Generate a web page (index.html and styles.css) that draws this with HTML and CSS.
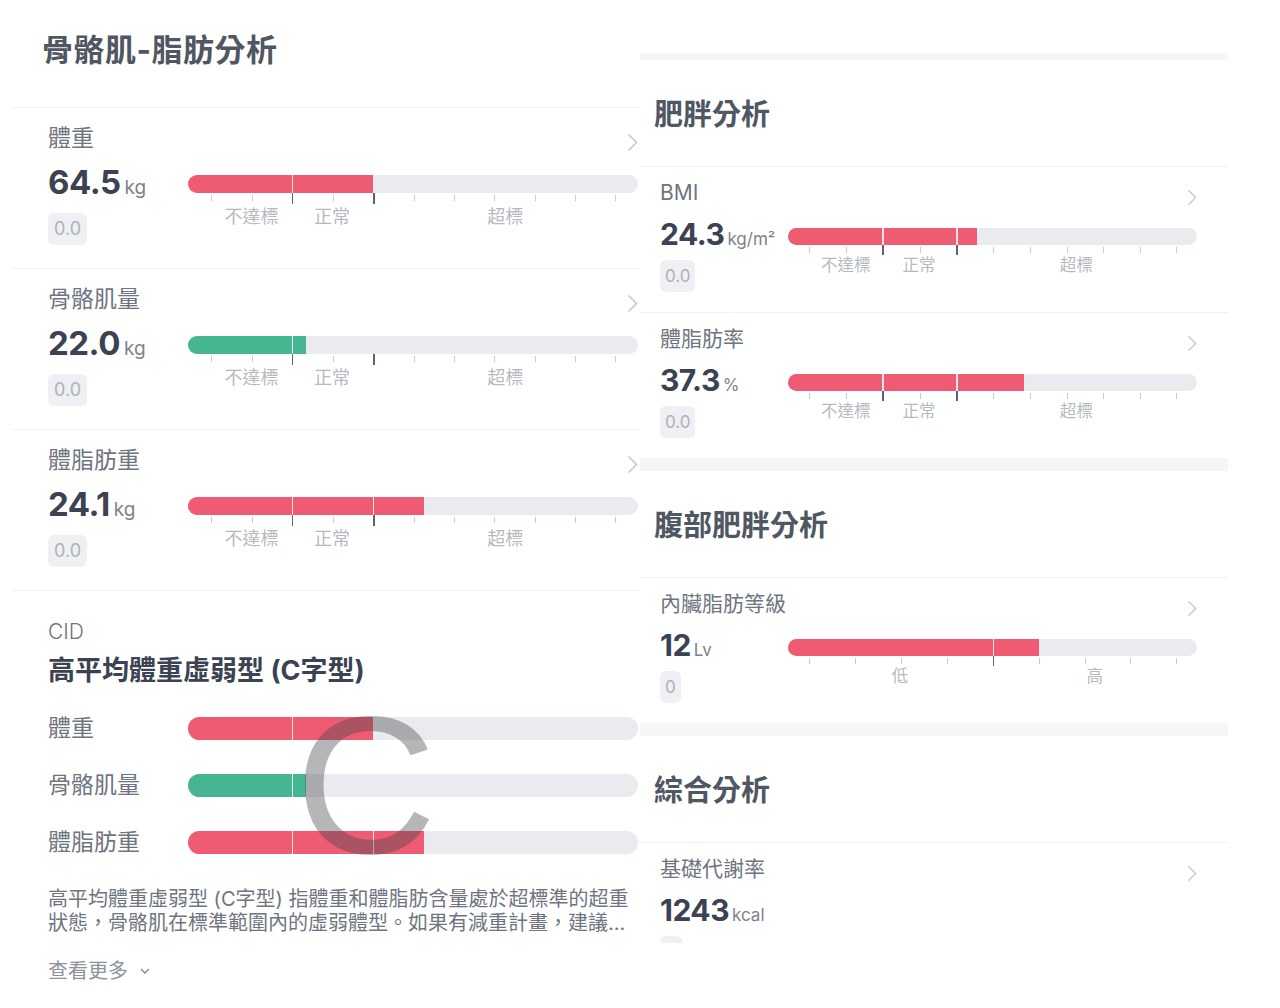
FILE: index.html
```html
<!DOCTYPE html>
<html lang="zh-Hant">
<head>
    <meta charset="UTF-8">
    <meta name="viewport" content="width=device-width, initial-scale=1.0">
    <title>身體組成分析</title>
    <link rel="stylesheet" href="styles.css">
</head>
<body>
    <div class="screens">

        <!-- Pantalla izquierda: músculo / grasa -->
        <section class="panel panel-left">
            <h2 class="panel-title">骨骼肌-脂肪分析</h2>

            <div class="metric">
                <div class="metric-head">
                    <span class="metric-name">體重</span>
                    <svg class="chev" viewBox="0 0 11 19"><polyline points="1.5,1.5 9.5,9.5 1.5,17.5"/></svg>
                </div>
                <div class="metric-body">
                    <div class="metric-value">
                        <div class="reading"><b>64.5</b><small>kg</small></div>
                        <span class="delta">0.0</span>
                    </div>
                    <div class="gauge">
                        <div class="track">
                            <div class="fill red" style="width:41.3%"></div>
                            <i class="cut cut-a"></i><i class="cut cut-b"></i>
                        </div>
                        <div class="ticks">
                            <i></i><i></i><i class="major"></i><i></i><i class="major"></i><i></i><i></i><i></i><i></i><i></i><i></i>
                        </div>
                        <div class="scale">
                            <span class="lbl-under">不達標</span><span class="lbl-normal">正常</span><span class="lbl-over">超標</span>
                        </div>
                    </div>
                </div>
            </div>

            <div class="metric">
                <div class="metric-head">
                    <span class="metric-name">骨骼肌量</span>
                    <svg class="chev" viewBox="0 0 11 19"><polyline points="1.5,1.5 9.5,9.5 1.5,17.5"/></svg>
                </div>
                <div class="metric-body">
                    <div class="metric-value">
                        <div class="reading"><b>22.0</b><small>kg</small></div>
                        <span class="delta">0.0</span>
                    </div>
                    <div class="gauge">
                        <div class="track">
                            <div class="fill green" style="width:26.2%"></div>
                            <i class="cut cut-a"></i>
                        </div>
                        <div class="ticks">
                            <i></i><i></i><i class="major"></i><i></i><i class="major"></i><i></i><i></i><i></i><i></i><i></i><i></i>
                        </div>
                        <div class="scale">
                            <span class="lbl-under">不達標</span><span class="lbl-normal">正常</span><span class="lbl-over">超標</span>
                        </div>
                    </div>
                </div>
            </div>

            <div class="metric">
                <div class="metric-head">
                    <span class="metric-name">體脂肪重</span>
                    <svg class="chev" viewBox="0 0 11 19"><polyline points="1.5,1.5 9.5,9.5 1.5,17.5"/></svg>
                </div>
                <div class="metric-body">
                    <div class="metric-value">
                        <div class="reading"><b>24.1</b><small>kg</small></div>
                        <span class="delta">0.0</span>
                    </div>
                    <div class="gauge">
                        <div class="track">
                            <div class="fill red" style="width:52.4%"></div>
                            <i class="cut cut-a"></i><i class="cut cut-b"></i>
                        </div>
                        <div class="ticks">
                            <i></i><i></i><i class="major"></i><i></i><i class="major"></i><i></i><i></i><i></i><i></i><i></i><i></i>
                        </div>
                        <div class="scale">
                            <span class="lbl-under">不達標</span><span class="lbl-normal">正常</span><span class="lbl-over">超標</span>
                        </div>
                    </div>
                </div>
            </div>

            <div class="cid">
                <div class="cid-tag">CID</div>
                <div class="cid-title">高平均體重虛弱型 (C字型)</div>

                <div class="cid-bars">
                    <span class="cid-name">體重</span>
                    <div class="track track-lg">
                        <div class="fill red" style="width:41.3%"></div>
                        <i class="cut cut-a"></i><i class="cut cut-b"></i>
                    </div>
                    <span class="cid-name">骨骼肌量</span>
                    <div class="track track-lg">
                        <div class="fill green" style="width:26.2%"></div>
                        <i class="cut cut-a"></i>
                    </div>
                    <span class="cid-name">體脂肪重</span>
                    <div class="track track-lg">
                        <div class="fill red" style="width:52.4%"></div>
                        <i class="cut cut-a"></i><i class="cut cut-b"></i>
                    </div>
                    <span class="cid-letter">C</span>
                </div>

                <p class="cid-desc">高平均體重虛弱型 (C字型) 指體重和體脂肪含量處於超標準的超重狀態，骨骼肌在標準範圍內的虛弱體型。如果有減重計畫，建議...</p>
                <div class="more">查看更多
                    <svg class="chev-down" viewBox="0 0 10 6"><polyline points="1,1 5,5 9,1"/></svg>
                </div>
            </div>
        </section>

        <!-- Pantalla derecha: obesidad -->
        <section class="panel panel-right">
            <div class="group">
                <h2 class="group-title">肥胖分析</h2>

                <div class="metric">
                    <div class="metric-head">
                        <span class="metric-name">BMI</span>
                        <svg class="chev" viewBox="0 0 11 19"><polyline points="1.5,1.5 9.5,9.5 1.5,17.5"/></svg>
                    </div>
                    <div class="metric-body">
                        <div class="metric-value">
                            <div class="reading"><b>24.3</b><small>kg/m²</small></div>
                            <span class="delta">0.0</span>
                        </div>
                        <div class="gauge">
                            <div class="track">
                                <div class="fill red" style="width:46.2%"></div>
                                <i class="cut cut-a"></i><i class="cut cut-b"></i>
                            </div>
                            <div class="ticks">
                                <i></i><i></i><i class="major"></i><i></i><i class="major"></i><i></i><i></i><i></i><i></i><i></i><i></i>
                            </div>
                            <div class="scale">
                                <span class="lbl-under">不達標</span><span class="lbl-normal">正常</span><span class="lbl-over">超標</span>
                            </div>
                        </div>
                    </div>
                </div>

                <div class="metric">
                    <div class="metric-head">
                        <span class="metric-name">體脂肪率</span>
                        <svg class="chev" viewBox="0 0 11 19"><polyline points="1.5,1.5 9.5,9.5 1.5,17.5"/></svg>
                    </div>
                    <div class="metric-body">
                        <div class="metric-value">
                            <div class="reading"><b>37.3</b><small>%</small></div>
                            <span class="delta">0.0</span>
                        </div>
                        <div class="gauge">
                            <div class="track">
                                <div class="fill red" style="width:57.7%"></div>
                                <i class="cut cut-a"></i><i class="cut cut-b"></i>
                            </div>
                            <div class="ticks">
                                <i></i><i></i><i class="major"></i><i></i><i class="major"></i><i></i><i></i><i></i><i></i><i></i><i></i>
                            </div>
                            <div class="scale">
                                <span class="lbl-under">不達標</span><span class="lbl-normal">正常</span><span class="lbl-over">超標</span>
                            </div>
                        </div>
                    </div>
                </div>
            </div>

            <div class="group">
                <h2 class="group-title">腹部肥胖分析</h2>

                <div class="metric">
                    <div class="metric-head">
                        <span class="metric-name">內臟脂肪等級</span>
                        <svg class="chev" viewBox="0 0 11 19"><polyline points="1.5,1.5 9.5,9.5 1.5,17.5"/></svg>
                    </div>
                    <div class="metric-body">
                        <div class="metric-value">
                            <div class="reading"><b>12</b><small>Lv</small></div>
                            <span class="delta">0</span>
                        </div>
                        <div class="gauge">
                            <div class="track">
                                <div class="fill red" style="width:61.4%"></div>
                                <i class="cut cut-mid"></i>
                            </div>
                            <div class="ticks">
                                <i></i><i></i><i></i><i></i><i class="major"></i><i></i><i></i><i></i><i></i>
                            </div>
                            <div class="scale">
                                <span class="lbl-low">低</span><span class="lbl-high">高</span>
                            </div>
                        </div>
                    </div>
                </div>
            </div>

            <div class="group">
                <h2 class="group-title">綜合分析</h2>

                <div class="metric">
                    <div class="metric-head">
                        <span class="metric-name">基礎代謝率</span>
                        <svg class="chev" viewBox="0 0 11 19"><polyline points="1.5,1.5 9.5,9.5 1.5,17.5"/></svg>
                    </div>
                    <div class="metric-body">
                        <div class="metric-value">
                            <div class="reading"><b>1243</b><small>kcal</small></div>
                            <span class="delta delta-empty"></span>
                        </div>
                    </div>
                </div>
            </div>
        </section>

    </div>
</body>
</html>
```

FILE: styles.css
```css
/* Reset básico */
* {
    box-sizing: border-box;
}

html, body {
    margin: 0;
    padding: 0;
    height: 100%;
    overflow: hidden;
    background-color: #fff;
    font-family: 'Inter', 'Noto Sans CJK TC', sans-serif;
    color: #3b4352;
}

.screens {
    display: flex;
    align-items: flex-start;
}

.panel {
    background-color: #fff;
}

/* ---------- Pantalla izquierda ---------- */
.panel-left {
    width: 628px;
    margin-left: 12px;
}

.panel-title {
    margin: 0;
    padding: 30px 0 37px 30px;
    font-size: 31px;
    line-height: 40px;
    font-weight: 700;
    letter-spacing: 0.5px;
    color: #4f5762;
    border-bottom: 1px solid #eff1f3;
}

.panel-left .metric {
    padding: 15px 2px 23px 36px;
    border-bottom: 1px solid #eff1f3;
}

.metric-head {
    display: flex;
    justify-content: space-between;
    align-items: flex-start;
}

.metric-name {
    font-size: 23px;
    line-height: 30px;
    color: #6e7580;
}

.chev {
    width: 11px;
    height: 19px;
    margin-top: 10px;
    fill: none;
    stroke: #c6cacf;
    stroke-width: 1.6;
}

.metric-body {
    display: grid;
    grid-template-columns: 140px 1fr;
    margin-top: 9px;
}

.metric-value {
    display: flex;
    flex-direction: column;
    align-items: flex-start;
}

.reading {
    display: flex;
    align-items: baseline;
    height: 40px;
    line-height: 40px;
    white-space: nowrap;
}

.reading b {
    font-size: 33px;
    font-weight: 700;
    letter-spacing: -0.5px;
    color: #3b4352;
}

.reading small {
    margin-left: 4px;
    font-size: 19px;
    color: #7c838d;
}

.delta {
    margin-top: 11px;
    height: 32px;
    line-height: 32px;
    padding: 0 6px;
    border-radius: 6px;
    background-color: #eef0f3;
    color: #adb2b9;
    font-size: 18px;
}

.delta-empty {
    width: 22px;
}

/* ---------- Barra de rango ---------- */
.gauge {
    padding-top: 13px;
}

.track {
    position: relative;
    height: 18px;
    border-radius: 9px;
    overflow: hidden;
    background-color: #e9ebee;
}

.fill {
    height: 100%;
}

.fill.red { background-color: #ef5b73; }
.fill.green { background-color: #46b592; }

.cut {
    position: absolute;
    top: 0;
    bottom: 0;
    width: 1.5px;
    background-color: rgba(255, 255, 255, 0.85);
}

.cut-a { left: 23.1%; }
.cut-b { left: 41.1%; }
.cut-mid { left: 50.1%; }

.ticks {
    display: flex;
    justify-content: space-between;
    align-items: flex-start;
    height: 13px;
    padding: 0 4.8% 0 5.2%;
}

.ticks i {
    width: 1px;
    height: 6px;
    margin-top: 2px;
    background-color: #c9cdd2;
}

.ticks i.major {
    width: 1.5px;
    height: 11px;
    margin-top: 0;
    background-color: #5d6470;
}

.scale {
    position: relative;
    height: 22px;
    font-size: 18px;
    line-height: 22px;
    color: #b5bac0;
}

.scale span {
    position: absolute;
    top: 0;
    transform: translateX(-50%);
    white-space: nowrap;
}

.lbl-under { left: 14.1%; }
.lbl-normal { left: 32%; }
.lbl-over { left: 70.5%; }
.lbl-low { left: 27.4%; }
.lbl-high { left: 75%; }

/* ---------- CID ---------- */
.cid {
    padding: 27px 2px 30px 36px;
}

.cid-tag {
    font-size: 21px;
    line-height: 28px;
    font-weight: 300;
    color: #6e7580;
}

.cid-title {
    margin-top: 7px;
    font-size: 27px;
    line-height: 36px;
    font-weight: 700;
    color: #3b4352;
}

.cid-bars {
    position: relative;
    display: grid;
    grid-template-columns: 140px 1fr;
    row-gap: 34px;
    align-items: center;
    margin-top: 28px;
}

.cid-name {
    font-size: 23px;
    line-height: 23px;
    color: #6e7580;
}

.track-lg {
    height: 23px;
    border-radius: 11.5px;
}

.cid-letter {
    position: absolute;
    left: 247px;
    top: -29px;
    font-family: 'Liberation Sans', sans-serif;
    font-size: 196px;
    font-weight: 400;
    line-height: 1;
    color: rgba(70, 72, 76, 0.4);
    pointer-events: none;
}

.cid-desc {
    margin: 33px 0 0;
    font-size: 20px;
    line-height: 24px;
    color: #6e7580;
}

.more {
    display: flex;
    align-items: center;
    margin-top: 22px;
    font-size: 20px;
    line-height: 28px;
    color: #8d939b;
}

.chev-down {
    width: 10px;
    height: 6px;
    margin-left: 12px;
    fill: none;
    stroke: #8d939b;
    stroke-width: 1.6;
}

/* ---------- Pantalla derecha ---------- */
.panel-right {
    width: 588px;
    height: 890px;
    margin-top: 53px;
    overflow: hidden;
}

.group {
    border-top: 13px solid #f4f6f8;
}

.group:first-child {
    border-top-width: 7px;
}

.group-title {
    margin: 0;
    padding: 35px 0 31px 14px;
    font-size: 29px;
    line-height: 40px;
    font-weight: 700;
    color: #4f5762;
    border-bottom: 1px solid #eff1f3;
}

.panel-right .metric {
    padding: 12px 31px 20px 20px;
    border-bottom: 1px solid #eff1f3;
}

.panel-right .metric:last-child {
    border-bottom: none;
}

.panel-right .metric-name {
    font-size: 21px;
    line-height: 28px;
}

.panel-right .chev {
    width: 10px;
    height: 17px;
}

.panel-right .metric-body {
    grid-template-columns: 128px 1fr;
    margin-top: 8px;
}

.panel-right .reading {
    height: 38px;
    line-height: 38px;
}

.panel-right .reading b {
    font-size: 30px;
}

.panel-right .reading small {
    margin-left: 3px;
    font-size: 17px;
}

.panel-right .delta {
    margin-top: 7px;
    font-size: 17px;
    padding: 0 5px;
}

.panel-right .track {
    height: 17px;
    border-radius: 8.5px;
}

.panel-right .ticks {
    height: 10px;
}

.panel-right .ticks i.major {
    height: 10px;
}

.panel-right .scale {
    height: 20px;
    font-size: 16.5px;
    line-height: 20px;
}
```
